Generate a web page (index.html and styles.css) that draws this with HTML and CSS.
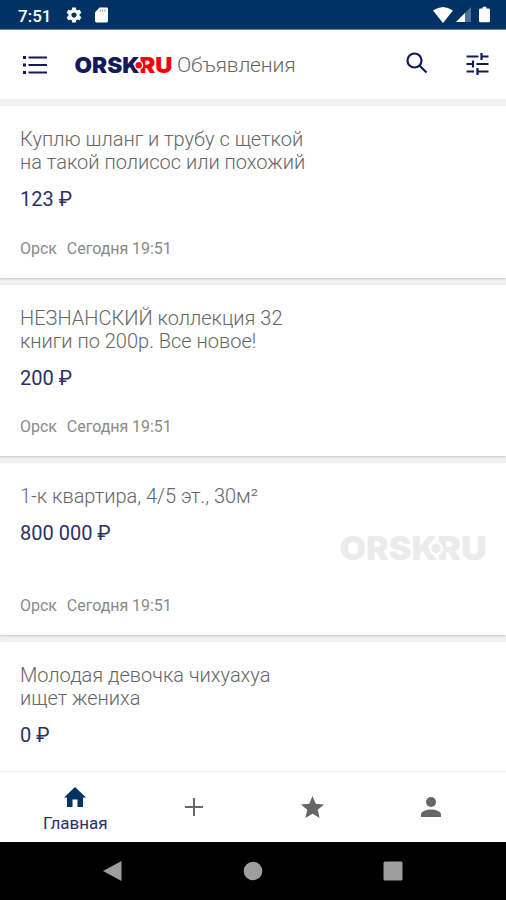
FILE: index.html
```
<!DOCTYPE html>
<html lang="ru">
<head>
  <meta charset="UTF-8" />
  <meta name="viewport" content="width=device-width, initial-scale=1.0"/>
  <title>Объявления</title>
  <link rel="stylesheet" href="styles.css">
</head>
<body>
  <div class="status-bar">
    <span class="time">7:51</span>
    <svg class="gear" viewBox="0 0 24 24"><path d="M19.43 12.98c.04-.32.07-.64.07-.98s-.03-.66-.07-.98l2.11-1.65c.19-.15.24-.42.12-.64l-2-3.46c-.12-.22-.39-.3-.61-.22l-2.49 1c-.52-.4-1.08-.73-1.69-.98l-.38-2.65C14.46 2.18 14.25 2 14 2h-4c-.25 0-.46.18-.49.42l-.38 2.65c-.61.25-1.17.59-1.69.98l-2.49-1c-.23-.09-.49 0-.61.22l-2 3.46c-.13.22-.07.49.12.64l2.11 1.65c-.04.32-.07.65-.07.98s.03.66.07.98l-2.11 1.65c-.19.15-.24.42-.12.64l2 3.46c.12.22.39.3.61.22l2.49-1c.52.4 1.08.73 1.69.98l.38 2.65c.03.24.24.42.49.42h4c.25 0 .46-.18.49-.42l.38-2.65c.61-.25 1.17-.59 1.69-.98l2.49 1c.23.09.49 0 .61-.22l2-3.46c.12-.22.07-.49-.12-.64l-2.11-1.65zM12 15.500c-1.930 0-3.500-1.570-3.500-3.500s1.570-3.500 3.500-3.500 3.500 1.570 3.500 3.500-1.570 3.500-3.500 3.500z"/></svg>
    <svg class="sd" viewBox="0 0 14 16"><path d="M5 0h7.500Q14 0 14 1.500v13q0 1.500-1.500 1.500h-11Q0 16 0 14.500V5z"/><path class="notch" d="M5.200 2h1v2.500h-1zM7.700 2h1v2.500h-1zM10.200 2h1v2.500h-1z"/></svg>
    <span class="spacer"></span>
    <svg class="wifi" viewBox="0 0 20 16"><path d="M0 3.500Q10-3.500 20 3.500L10 16z"/></svg>
    <svg class="signal" viewBox="0 0 16 16"><path class="dim" d="M16 0v16H0z"/><path d="M9.500 6.500V16H0z"/></svg>
    <svg class="battery" viewBox="0 0 12 17"><path d="M4 0h4v2h2.500Q12 2 12 3.500v12q0 1.500-1.500 1.500h-9Q0 17 0 15.500v-12Q0 2 1.500 2H4z"/></svg>
  </div>

  <header class="toolbar">
    <svg class="menu" viewBox="0 0 24 18"><path d="M0 0h3v3H0zM5.500.5H24v2H5.500zM0 7.500h3v3H0zM5.500 8H24v2H5.500zM0 15h3v3H0zM5.500 15.500H24v2H5.500z"/></svg>
    <svg class="logo" viewBox="0 0 98 20">
      <text x="-.5" y="18" textLength="65" lengthAdjust="spacingAndGlyphs">ORSK</text>
      <text class="red" x="64.500" y="18" textLength="33" lengthAdjust="spacingAndGlyphs">RU</text>
      <circle class="ring" cx="63.700" cy="10.300" r="4.500"/>
      <circle class="red" cx="63.700" cy="10.300" r="3.200"/>
    </svg>
    <h1>Объявления</h1>
    <span class="spacer"></span>
    <svg class="search" viewBox="0 0 22 22"><circle cx="8.500" cy="8.500" r="7"/><path d="M13.500 13.500l7 7"/></svg>
    <svg class="tune" viewBox="0 0 22 22"><path d="M0 3.500h12M14.500 3.500H22M15 0v7M0 11h7.500M10 11h12M6.500 7.500v7M0 18.500h7.500M10 18.500h12M11 15v7"/></svg>
  </header>

  <main class="list">
    <article class="card">
      <h2>Куплю шланг и трубу с щеткой<br>на такой полисос или похожий</h2>
      <p class="price">123 ₽</p>
      <p class="meta"><span>Орск</span><span>Сегодня 19:51</span></p>
    </article>
    <article class="card">
      <h2>НЕЗНАНСКИЙ коллекция 32<br>книги по 200р. Все новое!</h2>
      <p class="price">200 ₽</p>
      <p class="meta"><span>Орск</span><span>Сегодня 19:51</span></p>
    </article>
    <article class="card">
      <h2>1-к квартира, 4/5 эт., 30м²</h2>
      <p class="price">800 000 ₽</p>
      <p class="meta"><span>Орск</span><span>Сегодня 19:51</span></p>
      <svg class="placeholder" viewBox="0 0 98 20">
        <text x="-.5" y="18" textLength="65" lengthAdjust="spacingAndGlyphs">ORSK</text>
        <text x="64.500" y="18" textLength="33" lengthAdjust="spacingAndGlyphs">RU</text>
        <circle class="ring" cx="63.700" cy="10.300" r="4.500"/>
        <circle cx="63.700" cy="10.300" r="3.200"/>
      </svg>
    </article>
    <article class="card">
      <h2>Молодая девочка чихуахуа<br>ищет жениха</h2>
      <p class="price">0 ₽</p>
    </article>
  </main>

  <nav class="tabs">
    <a class="active">
      <svg class="home" viewBox="0 0 22 20"><path d="M11 0l11 10.500h-3V20h-5.500v-7.500h-5V20H3v-9.500H0z"/></svg>
      <span>Главная</span>
    </a>
    <a><svg class="plus" viewBox="0 0 18 18"><path d="M9 0v18M0 9h18"/></svg></a>
    <a><svg class="star" viewBox="2 2 20 19"><path d="M12 17.270L18.180 21l-1.640-7.030L22 9.240l-7.190-.610L12 2 9.190 8.630 2 9.240l5.460 4.730L5.820 21z"/></svg></a>
    <a><svg class="person" viewBox="0 0 20 20"><circle cx="10" cy="5" r="5"/><path d="M0 20v-2.500C0 14 6 12.500 10 12.500s10 1.500 10 5V20z"/></svg></a>
  </nav>

  <div class="system-nav">
    <svg viewBox="0 0 20 20"><path d="M18.500 0v20L0 10z"/></svg>
    <svg viewBox="0 0 20 20"><circle cx="10" cy="10" r="9.300"/></svg>
    <svg viewBox="0 0 20 20"><rect x=".5" y=".5" width="19" height="19" rx="1.500"/></svg>
  </div>
</body>
</html>
```
FILE: styles.css
```
* {
  box-sizing: border-box;
}

body {
  margin: 0;
  height: 900px;
  display: flex;
  flex-direction: column;
  overflow: hidden;
  font-family: Roboto, sans-serif;
  background: #fff;
  color: #666;
}

h1, h2, p {
  margin: 0;
  font-weight: 300;
}

svg {
  display: block;
  flex: none;
  fill: currentColor;
  overflow: visible;
}

.spacer {
  flex: 1;
}

.status-bar {
  flex: none;
  height: 30px;
  display: flex;
  align-items: center;
  padding: 0 16px 0 18px;
  background: #003265;
  border-bottom: 1px solid #6f7d9c;
  color: #fff;
}

.time {
  width: 47px;
  font-size: 17px;
  font-weight: 500;
  padding-top: 2px;
}

.gear {
  width: 18px;
  height: 18px;
  margin-right: 12px;
}

.sd {
  width: 13px;
  height: 16px;
}

.notch {
  fill: #8496b0;
}

.wifi {
  width: 20px;
  height: 16px;
  margin-right: 3px;
}

.signal {
  width: 15px;
  height: 15px;
  margin-right: 8px;
}

.dim {
  fill: #4d7293;
}

.battery {
  width: 11px;
  height: 17px;
}

.toolbar {
  flex: none;
  height: 69px;
  display: flex;
  align-items: center;
  padding: 0 17px 0 23px;
  color: #14195a;
}

.menu {
  width: 24px;
  height: 18px;
  margin-right: 28px;
}

.logo {
  width: 98px;
  height: 20px;
}

.logo text, .placeholder text {
  font-family: Inter, sans-serif;
  font-size: 22px;
  font-weight: 900;
}

.red {
  fill: #fc0006;
}

.ring {
  fill: #fff;
}

h1 {
  margin-left: 4px;
  padding-top: 1px;
  font-size: 21px;
  line-height: 28px;
  letter-spacing: -0.150px;
  color: #666;
}

.search {
  width: 22px;
  height: 22px;
  margin-right: 38px;
  margin-bottom: 3px;
  fill: none;
  stroke: #14195a;
  stroke-width: 2.2;
}

.tune {
  width: 23px;
  height: 22px;
  margin-bottom: 1px;
  fill: none;
  stroke: #14195a;
  stroke-width: 2.2;
}

.list {
  flex: 1;
  min-height: 0;
  overflow: hidden;
  background: #f1f1f1;
  padding-top: 7px;
  display: flex;
  flex-direction: column;
  gap: 7px;
}

.card {
  flex: none;
  position: relative;
  height: 171.600px;
  padding: 22px 20px 19px;
  display: flex;
  flex-direction: column;
  background: #fff;
  box-shadow: 0 1px 2px rgba(0, 0, 0, 0.18);
}

.card h2 {
  font-size: 20px;
  line-height: 23px;
}

.price {
  margin-top: 13px;
  font-size: 20px;
  font-weight: 400;
  line-height: 24px;
  color: #2a3169;
}

.meta {
  display: flex;
  gap: 10px;
  margin-top: auto;
  font-size: 16px;
  font-weight: 400;
  line-height: 20px;
  letter-spacing: -0.050px;
  color: #8a8a8a;
}

.placeholder {
  position: absolute;
  right: 18px;
  top: 70px;
  width: 148px;
  height: 30px;
  color: #ebebeb;
}

.tabs {
  flex: none;
  height: 71px;
  display: flex;
  padding: 0 16px;
  background: #fff;
  border-top: 1px solid #f0f0f0;
  color: #666;
}

.tabs a {
  flex: 1;
  display: flex;
  flex-direction: column;
  align-items: center;
  justify-content: center;
}

.tabs .active {
  padding-top: 5px;
  color: #2a3169;
  font-size: 17px;
  line-height: 20px;
}

.home {
  width: 22px;
  height: 20px;
  margin-bottom: 6px;
  color: #003265;
}

.plus {
  width: 18px;
  height: 18px;
  stroke: #666;
  stroke-width: 2;
}

.star {
  width: 23px;
  height: 22px;
}

.person {
  width: 20px;
  height: 20px;
}

.system-nav {
  flex: none;
  height: 58px;
  display: flex;
  align-items: center;
  justify-content: space-between;
  padding: 0 103px;
  background: #000;
  color: #9e9e9e;
}

.system-nav svg {
  width: 20px;
  height: 20px;
}
```
